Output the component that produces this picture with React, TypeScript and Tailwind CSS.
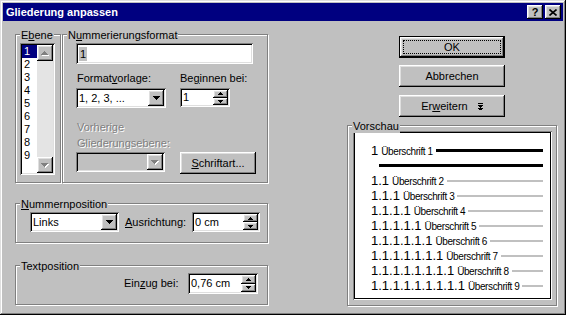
import React from "react";

const sunken =
  "shadow-[inset_1px_1px_0_#808080,inset_-1px_-1px_0_#fff,inset_2px_2px_0_#000,inset_-2px_-2px_0_#dfdfdf]";
const raised =
  "bg-[#c0c0c0] shadow-[inset_-1px_-1px_0_#000,inset_1px_1px_0_#fff,inset_-2px_-2px_0_#808080,inset_2px_2px_0_#dfdfdf]";
const disabledText = "text-[#808080] [text-shadow:1px_1px_0_#fff]";

function Tri({
  down = true,
  size = 4,
  color = "#000",
  emboss = false,
}: {
  down?: boolean;
  size?: number;
  color?: string;
  emboss?: boolean;
}) {
  const w = size * 2 - 1;
  const rects = (dx: number, fill: string) =>
    Array.from({ length: size }, (_, i) => (
      <rect
        key={`${dx}-${i}`}
        x={i + dx}
        y={(down ? i : size - 1 - i) + dx}
        width={w - 2 * i}
        height={1}
        fill={fill}
      />
    ));
  return (
    <svg
      width={w + (emboss ? 1 : 0)}
      height={size + (emboss ? 1 : 0)}
      className="block"
      shapeRendering="crispEdges"
    >
      {emboss && rects(1, "#fff")}
      {rects(0, color)}
    </svg>
  );
}

function Group({
  label,
  className = "",
  children,
}: {
  label: React.ReactNode;
  className?: string;
  children?: React.ReactNode;
}) {
  return (
    <div
      className={`relative border border-[#808080] shadow-[inset_1px_1px_0_#fff,1px_1px_0_#fff] ${className}`}
    >
      <div className="absolute -top-[6px] left-[4px] px-px bg-[#c0c0c0] leading-[13px] whitespace-nowrap">
        {label}
      </div>
      {children}
    </div>
  );
}

function Combo({
  className = "",
  value,
  disabled = false,
}: {
  className?: string;
  value?: React.ReactNode;
  disabled?: boolean;
}) {
  return (
    <div
      className={`flex p-[2px] ${disabled ? "bg-[#c0c0c0]" : "bg-white"} ${sunken} ${className}`}
    >
      <div className="flex-1 flex items-center pl-[1px] whitespace-nowrap overflow-hidden leading-[13px]">
        {value}
      </div>
      <div className={`w-[16px] h-full flex items-center justify-center ${raised}`}>
        {disabled ? <Tri emboss color="#808080" /> : <Tri />}
      </div>
    </div>
  );
}

function Spinner({ className = "", value }: { className?: string; value: string }) {
  return (
    <div className={`flex p-[2px] bg-white ${sunken} ${className}`}>
      <div className="flex-1 flex items-center pl-[1px] leading-[13px] whitespace-nowrap">
        {value}
      </div>
      <div className="w-[15px] flex flex-col">
        <div className={`flex-1 flex items-center justify-center ${raised}`}>
          <Tri down={false} size={3} />
        </div>
        <div className={`flex-1 flex items-center justify-center ${raised}`}>
          <Tri size={3} />
        </div>
      </div>
    </div>
  );
}

function Btn({ children, className = "" }: { children: React.ReactNode; className?: string }) {
  return (
    <div className={`h-[22px] w-[106px] flex items-center justify-center ${raised} ${className}`}>
      {children}
    </div>
  );
}

function ExpandIcon() {
  return (
    <svg width="5" height="7" className="block" shapeRendering="crispEdges">
      <rect x="0" y="0" width="5" height="1" fill="#000" />
      <rect x="0" y="2" width="5" height="1" fill="#000" />
      <rect x="1" y="3" width="3" height="1" fill="#000" />
      <rect x="2" y="4" width="1" height="1" fill="#000" />
      <rect x="0" y="5" width="5" height="1" fill="#000" />
      <rect x="1" y="6" width="3" height="1" fill="#000" />
    </svg>
  );
}

export default function App() {
  const levels = [2, 3, 4, 5, 6, 7, 8, 9];
  return (
    <div className="w-[566px] h-[315px] overflow-hidden bg-[#c0c0c0] text-black text-[11px] font-['Liberation_Sans',Arial,sans-serif] flex flex-col shadow-[inset_-1px_-1px_0_#000,inset_1px_1px_0_#dfdfdf,inset_-2px_-2px_0_#808080,inset_2px_2px_0_#fff]">
      {/* Title bar */}
      <div className="mx-[3px] mt-[3px] h-[18px] bg-[#000080] flex items-center pl-[3px] pr-[2px]">
        <div className="flex-1 text-white font-bold leading-[18px] whitespace-nowrap">
          Gliederung anpassen
        </div>
        <div className="flex items-center gap-[2px]">
          <div className={`w-[16px] h-[14px] flex items-center justify-center font-bold text-[11px] leading-[14px] ${raised}`}>
            ?
          </div>
          <div className={`w-[16px] h-[14px] flex items-center justify-center ${raised}`}>
            <svg width="8" height="7" className="block">
              <path d="M0.5 0.5 L7.5 6.5 M7.5 0.5 L0.5 6.5" stroke="#000" strokeWidth="1.6" />
            </svg>
          </div>
        </div>
      </div>

      {/* Body */}
      <div className="flex">
        {/* Left column */}
        <div className="ml-[15px] w-[253px] mt-[13px] flex flex-col">
          <div className="flex gap-px">
            {/* Ebene */}
            <Group
              className="w-[46px] h-[149px]"
              label={
                <span>
                  E<span className="underline">b</span>ene
                </span>
              }
            >
              <div className={`ml-[4px] mt-[8px] w-[35px] h-[132px] bg-white p-[2px] flex ${sunken}`}>
                <div className="w-[15px] flex flex-col">
                  {["1", "2", "3", "4", "5", "6", "7", "8", "9"].map((n, i) => (
                    <div
                      key={n}
                      className={`h-[13px] leading-[13px] pl-[2px] ${i === 0 ? "bg-[#000080] text-white" : ""}`}
                    >
                      {n}
                    </div>
                  ))}
                </div>
                <div className="w-[16px] flex flex-col bg-[#e4e4e4]">
                  <div className={`h-[16px] flex items-center justify-center ${raised}`}>
                    <Tri down={false} emboss color="#808080" />
                  </div>
                  <div className="flex-1" />
                  <div className={`h-[16px] flex items-center justify-center ${raised}`}>
                    <Tri emboss color="#808080" />
                  </div>
                </div>
              </div>
            </Group>

            {/* Nummerierungsformat */}
            <Group
              className="w-[206px] h-[149px]"
              label={
                <span>
                  N<span className="underline">u</span>mmerierungsformat
                </span>
              }
            >
              <div className="ml-[13px] mt-[8px] flex flex-col">
                <div className={`w-[177px] h-[21px] bg-white p-[2px] flex items-center ${sunken}`}>
                  <span className="ml-[1px] px-px bg-[#c0c0c0] leading-[14px]">1</span>
                </div>
                <div className="mt-[8px] flex gap-[14px]">
                  <div className="w-[90px] flex flex-col">
                    <div className="leading-[13px] whitespace-nowrap pl-px">
                      Format<span className="underline">v</span>orlage:
                    </div>
                    <Combo className="mt-[3px] w-[90px] h-[20px]" value="1, 2, 3, ..." />
                  </div>
                  <div className="w-[50px] flex flex-col">
                    <div className="leading-[13px] whitespace-nowrap">
                      Be<span className="underline">g</span>innen bei:
                    </div>
                    <Spinner className="mt-[3px] w-[50px] h-[19px]" value="1" />
                  </div>
                </div>
                <div className="mt-[11px] flex gap-[14px] items-start">
                  <div className="w-[90px] flex flex-col">
                    <div className={`leading-[16px] whitespace-nowrap pl-px ${disabledText}`}>
                      Vorherige
                      <br />
                      Gliederungsebene:
                    </div>
                    <Combo disabled className="mt-px w-[89px] h-[20px]" />
                  </div>
                  <div className={`mt-[33px] w-[76px] h-[22px] flex items-center justify-center ${raised}`}>
                    <span>
                      <span className="underline">S</span>chriftart...
                    </span>
                  </div>
                </div>
              </div>
            </Group>
          </div>

          {/* Nummernposition */}
          <Group
            className="mt-[20px] w-[253px] h-[40px]"
            label={
              <span>
                <span className="underline">N</span>ummernposition
              </span>
            }
          >
            <div className="ml-[14px] mt-[8px] flex items-center">
              <Combo className="w-[89px] h-[20px]" value="Links" />
              <div className="ml-[6px] w-[67px] leading-[13px] whitespace-nowrap">
                <span className="underline">A</span>usrichtung:
              </div>
              <Spinner className="w-[68px] h-[20px]" value="0 cm" />
            </div>
          </Group>

          {/* Textposition */}
          <Group className="mt-[22px] w-[253px] h-[40px]" label="Textposition">
            <div className="ml-[108px] mt-[7px] flex items-center">
              <div className="w-[64px] leading-[13px] whitespace-nowrap">
                Ein<span className="underline">z</span>ug bei:
              </div>
              <Spinner className="w-[70px] h-[21px]" value="0,76 cm" />
            </div>
          </Group>
        </div>

        {/* Right column */}
        <div className="ml-[79px] w-[210px] flex flex-col">
          <div className="ml-[52px] flex flex-col">
            <div className="mt-[15px] w-[106px] h-[22px] border border-black">
              <div className={`relative h-full flex items-center justify-center ${raised}`}>
                <div className="absolute inset-[3px] border border-dotted border-black" />
                OK
              </div>
            </div>
            <Btn className="mt-[7px]">Abbrechen</Btn>
            <Btn className="mt-[8px]">
              <span className="flex items-center gap-[10px]">
                <span>
                  Er<span className="underline">w</span>eitern
                </span>
                <ExpandIcon />
              </span>
            </Btn>
          </div>

          {/* Vorschau */}
          <Group className="mt-[8px] w-[210px] h-[181px]" label="Vorschau">
            <div
              className={`ml-[5px] mt-[5px] w-[199px] h-[169px] bg-white pt-[12px] pl-[18px] pr-[9px] flex flex-col shadow-[inset_1px_1px_0_#808080,inset_-1px_-1px_0_#fff,inset_2px_2px_0_#000,inset_-2px_-2px_0_#000]`}
            >
              <div className="h-[15px] flex items-center">
                <span className="flex items-baseline whitespace-nowrap">
                  <span className="text-[13px] leading-[15px]">1</span>
                  <span className="ml-[3px] text-[10px] tracking-[-0.4px] leading-[15px]">
                    Überschrift 1
                  </span>
                </span>
                <div className="ml-[3px] flex-1 h-[3px] bg-black" />
              </div>
              <div className="h-[15px] flex items-center">
                <div className="ml-[8px] flex-1 h-[3px] bg-black" />
              </div>
              {levels.map((n) => (
                <div key={n} className="h-[15px] flex items-center">
                  <span className="flex items-baseline whitespace-nowrap">
                    <span className="text-[13px] leading-[15px]">
                      {Array.from({ length: n }, () => "1").join(".")}
                    </span>
                    <span className="ml-[3px] text-[10px] tracking-[-0.4px] leading-[15px]">
                      Überschrift {n}
                    </span>
                  </span>
                  <div className="ml-[3px] flex-1 h-[2px] bg-[#c0c0c0]" />
                </div>
              ))}
            </div>
          </Group>
        </div>
      </div>
    </div>
  );
}
